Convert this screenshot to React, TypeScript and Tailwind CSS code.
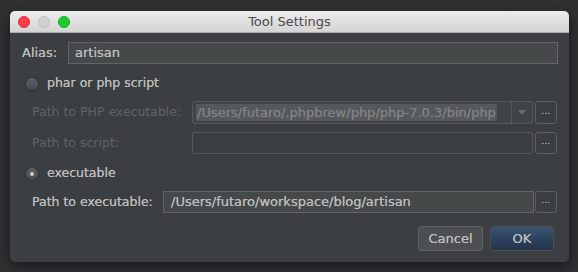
import React from "react";

const font = { fontFamily: '"DejaVu Sans", "Liberation Sans", sans-serif' };
const thick = "[text-shadow:0_0_0.6px_currentColor]";

function Dots() {
  return (
    <div className="w-[22px] h-full flex items-end justify-center pb-[7px] rounded-[3px] border border-[#5e6060] bg-[#3c3f41] text-[#bbbbbb] text-[8px] leading-none">
      <span className="tracking-[0.5px]">...</span>
    </div>
  );
}

function Radio({ checked }: { checked?: boolean }) {
  return (
    <div className="w-[14px] h-[14px] rounded-full border border-[#2e3031] bg-gradient-to-b from-[#5d6163] to-[#484b4d] flex items-center justify-center">
      {checked && <div className="w-[4px] h-[4px] rounded-full bg-[#cfcfcf]" />}
    </div>
  );
}

export default function App() {
  return (
    <div className="w-[578px] h-[272px] bg-[#2e3032] overflow-hidden" style={font}>
      <div className="ml-[10px] pt-[11px]">
        <div className="w-[559px] h-[251px] rounded-[5px] bg-[#3c3f41] flex flex-col shadow-[0_4px_12px_rgba(0,0,0,0.5)] overflow-hidden">
          {/* Title bar */}
          <div className="relative h-[22px] shrink-0 bg-gradient-to-b from-[#ececec] to-[#d4d4d4] border-b border-[#aeaeae] flex items-center justify-center">
            <div className="absolute left-[8px] top-[5px] flex gap-[8px]">
              <div className="w-[12px] h-[12px] rounded-full bg-[#fc3d4a] border border-[#e0313d]" />
              <div className="w-[12px] h-[12px] rounded-full bg-[#d0d0d0] border border-[#c0c0c0]" />
              <div className="w-[12px] h-[12px] rounded-full bg-[#1ccc2c] border border-[#14b322]" />
            </div>
            <span className="text-[13px] text-[#4a4a4a] leading-none">Tool Settings</span>
          </div>

          {/* Body */}
          <div className={`flex flex-col pr-[11px] text-[12px] text-[#bbbbbb] ${thick}`}>
            {/* Alias */}
            <div className="mt-[9px] h-[22px] flex items-center pl-[12px]">
              <span className="w-[46px] text-[13px]">Alias:</span>
              <div className="flex-1 h-full border border-[#646464] bg-[#45494a] flex items-center pl-[6px] text-[13px]">
                artisan
              </div>
            </div>

            {/* phar radio */}
            <div className="mt-[13px] h-[13px] flex items-center pl-[15px]">
              <Radio />
              <span className="ml-[8px] text-[12.5px]">phar or php script</span>
            </div>

            {/* PHP executable */}
            <div className="mt-[11px] h-[23px] flex items-center pl-[22px] pr-[1px]">
              <span className="w-[160px] text-[#5f6264] text-[12.5px] [text-shadow:none]">Path to PHP executable:</span>
              <div className="flex-1 h-full flex border border-[#56595b] rounded-[2px] bg-[#414446]">
                <div className="flex-1 flex items-center px-[3px]">
                  <span className="bg-[#56595b] text-[#7f8283] text-[13px] leading-[17px] px-[1px] whitespace-nowrap">/Users/futaro/.phpbrew/php/php-7.0.3/bin/php</span>
                </div>
                <div className="w-[21px] border-l border-[#56595b] flex items-center justify-center">
                  <svg width="8" height="5" viewBox="0 0 8 5"><path d="M0 0 L8 0 L4 5 Z" fill="#6a6d6f" /></svg>
                </div>
              </div>
              <div className="ml-[2px] h-full"><Dots /></div>
            </div>

            {/* Script */}
            <div className="mt-[8px] h-[22px] flex items-center pl-[22px] pr-[1px]">
              <span className="w-[160px] text-[#5f6264] text-[12.5px] [text-shadow:none]">Path to script:</span>
              <div className="flex-1 h-full border border-[#56595b] rounded-[2px] bg-[#3c3f41]" />
              <div className="ml-[2px] h-full"><Dots /></div>
            </div>

            {/* executable radio */}
            <div className="mt-[13px] h-[13px] flex items-center pl-[15px]">
              <Radio checked />
              <span className="ml-[8px] text-[12.5px]">executable</span>
            </div>

            {/* Exec path */}
            <div className="mt-[11px] h-[22px] flex items-center pl-[22px] pr-[1px]">
              <span className="w-[131px] text-[12.5px]">Path to executable:</span>
              <div className="flex-1 h-full border border-[#646464] bg-[#45494a] flex items-center pl-[7px] text-[13px] whitespace-nowrap">
                /Users/futaro/workspace/blog/artisan
              </div>
              <div className="ml-[1px] h-full"><Dots /></div>
            </div>

            {/* Buttons */}
            <div className="mt-[13px] h-[25px] flex justify-end gap-[7px] pr-[4px]">
              <div className="w-[65px] h-full rounded-[3px] border border-[#5e6060] bg-[#4c5052] flex items-center justify-center text-[13px]">Cancel</div>
              <div className="w-[64px] h-full rounded-[3px] border border-[#4c5052] bg-gradient-to-b from-[#3a5373] to-[#24344a] flex items-center justify-center text-[13px]">OK</div>
            </div>
          </div>
        </div>
      </div>
    </div>
  );
}
